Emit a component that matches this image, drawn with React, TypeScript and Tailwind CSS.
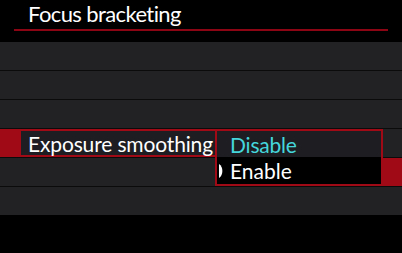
import React from "react";

const RED = "bg-[#a00a17]";

export default function App() {
  return (
    <div className="relative w-[402px] h-[253px] bg-black overflow-hidden font-['Lato',sans-serif] text-white whitespace-nowrap">
      <div className="h-[42px] flex flex-col">
        <div className="h-[29px] pl-[28px] text-[22px] leading-[28px] tracking-[-0.6px]">Focus bracketing</div>
        <div className="h-[2px] mx-[14px] bg-[#8c0514]" />
      </div>
      <div className="flex flex-col gap-px bg-[#0b0b0b]">
        <div className="h-[28px] bg-[#222224]" />
        <div className="h-[28px] bg-[#222224]" />
        <div className="h-[28px] bg-[#222224]" />
        <div className="h-[28px] flex">
          <div className={`w-[383px] ${RED} flex items-center pl-[21px]`}>
            <div className="w-[194px] h-[24px] bg-[#1e1e22] pl-[7px] text-[21px] leading-[25px] tracking-[-0.15px]">Exposure smoothing</div>
          </div>
          <div className="flex-1 bg-[#222224]" />
        </div>
        <div className="h-[28px] flex">
          <div className="w-[383px] bg-[#222224]" />
          <div className={`flex-1 ${RED}`} />
        </div>
        <div className="h-[28px] bg-[#222224]" />
      </div>
      <div className="absolute left-[215px] top-[129px] w-[168px] h-[57px] border-2 border-[#a00a17] flex flex-col">
        <div className="h-[26px] bg-[#1e1e22] pl-[13px] text-[21px] leading-[27px] tracking-[-0.2px] text-[#45d6dc]">Disable</div>
        <div className="flex-1 bg-black flex items-center">
          <svg width="4" height="14" viewBox="0 0 4 14" className="ml-[2px] mr-[7px]">
            <path d="M0 0 C4.5 3 4.5 11 0 14 Z" fill="#fff" />
          </svg>
          <span className="text-[21px] leading-[27px]">Enable</span>
        </div>
      </div>
    </div>
  );
}
